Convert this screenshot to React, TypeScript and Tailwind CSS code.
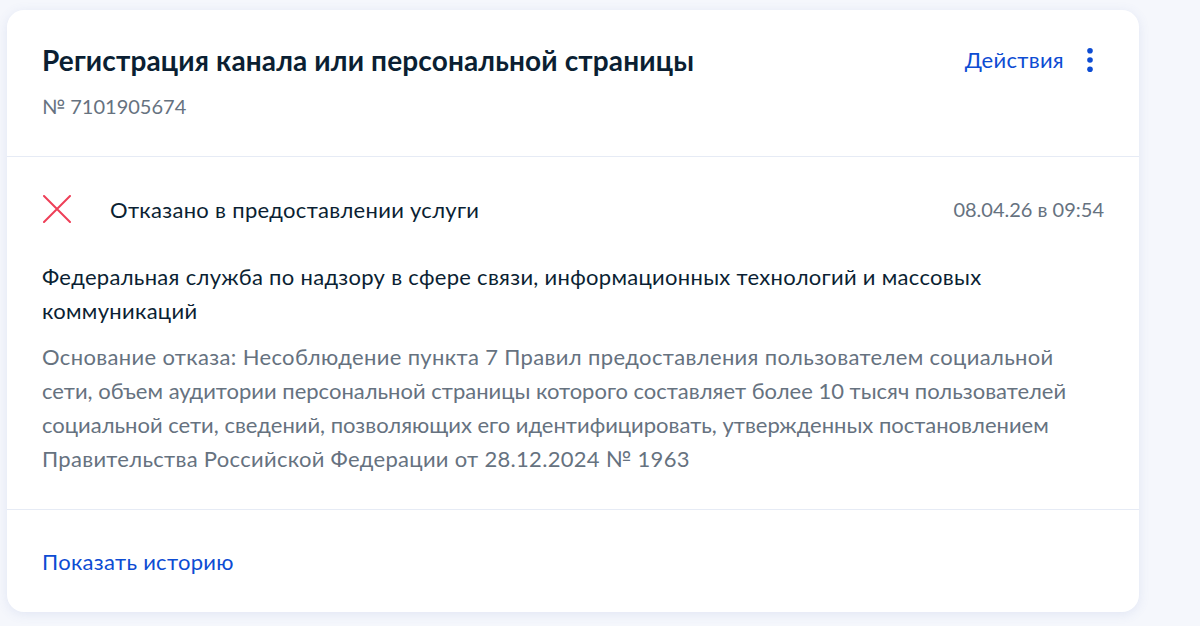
import React from 'react';

const font = { fontFamily: 'Lato, "Noto Sans", sans-serif' };

const CrossIcon = () => (
  <svg width="28" height="28" viewBox="0 0 28 28" fill="none" className="shrink-0">
    <path d="M1 1L27 27M27 1L1 27" stroke="#ee3f58" strokeWidth="2" strokeLinecap="round" />
  </svg>
);

const DotsIcon = () => (
  <svg width="28" height="28" viewBox="0 0 28 28" fill="#0d4cd3">
    <circle cx="14" cy="4.7" r="2.8" />
    <circle cx="14" cy="14" r="2.8" />
    <circle cx="14" cy="23.3" r="2.8" />
  </svg>
);

export default function App() {
  return (
    <div className="min-h-[626px] w-full bg-[#f5f7fc] pl-[7px] pt-[10px]" style={font}>
      <div className="w-[1132px] rounded-[17px] bg-white shadow-[0_2px_12px_rgba(86,110,180,0.12)]">
        {/* Header */}
        <div className="flex items-start justify-between px-[35px] pt-[32px] pb-[36px]">
          <div>
            <h1 className="text-[28px] font-bold leading-[36px] tracking-[0.14px] text-[#0b1f33]">
              Регистрация канала или персональной страницы
            </h1>
            <p className="mt-[14px] text-[20px] leading-[28px] text-[#66727f]">№ 7101905674</p>
          </div>
          <button className="flex items-center gap-3 pt-[4px] text-[22px] leading-[28px] tracking-[0.3px] text-[#0d4cd3]">
            <span>Действия</span>
            <DotsIcon />
          </button>
        </div>

        <div className="h-px bg-[#e6ebf5]" />

        {/* Status */}
        <div className="px-[35px] pt-[34px] pb-[33px]">
          <div className="flex h-[36px] items-center">
            <div className="flex w-[68px] pl-[1px]">
              <CrossIcon />
            </div>
            <span className="flex-1 text-[22px] tracking-[0.3px] text-[#0b1f33]">
              Отказано в предоставлении услуги
            </span>
            <span className="text-[20px] text-[#66727f]">08.04.26 в 09:54</span>
          </div>
          <p className="mt-[33px] text-[22px] leading-[34px] tracking-[0.3px] text-[#0b1f33]">
            Федеральная служба по надзору в сфере связи, информационных технологий и массовых коммуникаций
          </p>
          <p className="mt-3 text-[22px] leading-[34px] text-[#66727f]">
            <span className="tracking-[0.35px]">
              Основание отказа: Несоблюдение пункта 7 Правил предоставления пользователем социальной
            </span>
            <br />
            сети, объем аудитории персональной страницы которого составляет более 10 тысяч пользователей
            <br />
            социальной сети, сведений, позволяющих его идентифицировать, утвержденных постановлением
            <br />
            <span className="tracking-[0.3px]">Правительства Российской Федерации от 28.12.2024 № 1963</span>
          </p>
        </div>

        <div className="h-px bg-[#e6ebf5]" />

        {/* Footer */}
        <div className="px-[35px] pt-[35px] pb-[33px]">
          <button className="text-[22px] leading-[34px] tracking-[0.3px] text-[#0d4cd3]">Показать историю</button>
        </div>
      </div>
    </div>
  );
}
